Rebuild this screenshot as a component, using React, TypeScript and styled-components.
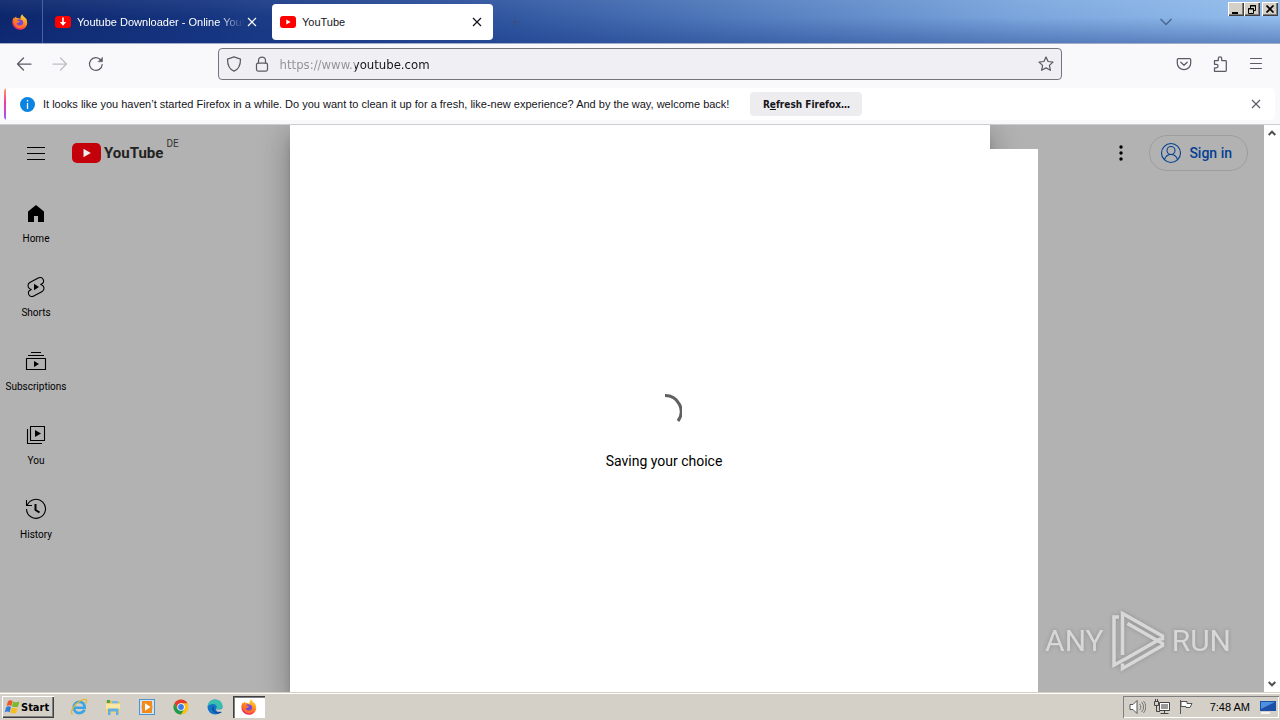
import React from "react";
import styled, { createGlobalStyle, css } from "styled-components";

const ui = `"Liberation Sans", Arial, sans-serif`;
const condensed = `"DejaVu Sans Condensed", "DejaVu Sans", sans-serif`;
const roboto = `Roboto, sans-serif`;

const GlobalStyle = createGlobalStyle`
  *, *::before, *::after { box-sizing: border-box; }
  body { margin: 0; overflow: hidden; font-family: ${ui}; font-size: 11px; color: #15141a; }
  button, input { font: inherit; color: inherit; padding: 0; border: 0; background: none; }
  svg { display: block; flex: none; }
  a { color: inherit; text-decoration: none; }
`;

const Screen = styled.div`
  display: flex;
  flex-direction: column;
  height: 100vh;
`;

/* Title bar */
const TitleBar = styled.header`
  display: flex;
  align-items: stretch;
  height: 44px;
  flex: none;
  border-bottom: 1px solid #a3aec6;
  background:
    linear-gradient(180deg, rgba(255, 255, 255, 0.06), rgba(20, 50, 130, 0) 40%, rgba(20, 50, 130, 0.38)),
    linear-gradient(90deg, #0c266c 0%, #163580 16%, #2b509b 36%, #5580c0 60%, #7ba6dd 80%, #93bdec 100%);
`;

const FirefoxView = styled.button`
  display: flex;
  align-items: center;
  justify-content: center;
  width: 43px;
  padding-right: 2px;
  border-right: 1px solid #4a629c;
`;

const TabStrip = styled.nav`
  display: flex;
  flex: 1;
  align-items: center;
  gap: 4px;
  padding-left: 4px;
`;

const Tab = styled.div<{ $active?: boolean }>`
  display: flex;
  align-items: center;
  width: 221px;
  height: 36px;
  padding: 0 8px;
  border-radius: 4px;
  color: ${(p) => (p.$active ? "#15141a" : "#fff")};
  background: ${(p) => (p.$active ? "#fff" : "transparent")};
`;

const TabTitle = styled.button<{ $fade?: boolean }>`
  display: flex;
  align-items: center;
  gap: 6px;
  flex: 1;
  min-width: 0;
  overflow: hidden;
  white-space: nowrap;
  text-align: left;
  ${(p) =>
    p.$fade &&
    css`
      mask-image: linear-gradient(90deg, #000 calc(100% - 26px), transparent);
    `}
`;

const IconButton = styled.button<{ $size?: number }>`
  display: flex;
  align-items: center;
  justify-content: center;
  flex: none;
  width: ${(p) => p.$size ?? 16}px;
  height: ${(p) => p.$size ?? 16}px;
`;

const TabsMenu = styled(IconButton)`
  align-self: center;
  margin-right: 54px;
`;

const WindowButtons = styled.div`
  display: flex;
  padding: 2px 2px 0 0;
`;

const WindowButton = styled.button<{ $apart?: boolean }>`
  display: flex;
  align-items: center;
  justify-content: center;
  width: 16px;
  height: 14px;
  margin-left: ${(p) => (p.$apart ? 2 : 0)}px;
  background: #d4d0c8;
  box-shadow: inset 1px 1px #fff, inset -1px -1px #404040, inset -2px -2px #808080;
`;

/* Navigation bar */
const NavBar = styled.div`
  display: flex;
  align-items: center;
  flex: none;
  height: 42px;
  padding: 0 6px 2px;
  background: #f9f9fb;
  color: #5b5b66;
`;

const Spring = styled.div`
  flex: 10;
`;

const UrlBox = styled.form`
  display: flex;
  align-items: center;
  flex: 80;
  height: 32px;
  padding: 0 7px;
  border: 1px solid #76757e;
  border-radius: 4px;
  background: #f0f0f4;
`;

const UrlInput = styled.input`
  flex: 1;
  height: 20px;
  margin-left: 10px;
  outline: 0;
  font-family: ${condensed};
  font-size: 13px;
  background: linear-gradient(90deg, #8f8f98 75px, #15141a 75px);
  background-clip: text;
  -webkit-background-clip: text;
  color: transparent;
`;

const Gap = styled.div`
  width: 12px;
`;

/* Notification */
const NoticeWrap = styled.div`
  flex: none;
  padding: 2px 5px 4px 4px;
  background: #f9f9fb;
  border-bottom: 1px solid #cccccf;
`;

const Notice = styled.div`
  display: flex;
  align-items: center;
  height: 32px;
  border-radius: 4px;
  background: linear-gradient(180deg, #ff9a66, #f03ba0 45%, #9059ff) 0 0 / 2px 100% no-repeat, #fff;
  padding: 0 11px 0 16px;
`;

const NoticeText = styled.span`
  margin: 0 21px 0 8px;
  white-space: nowrap;
`;

const RefreshButton = styled.button`
  width: 112px;
  height: 24px;
  border-radius: 4px;
  background: #ededf0;
  font-family: ${condensed};
  font-size: 10px;
  font-weight: 700;
  white-space: nowrap;
  margin-right: auto;
`;

/* Page */
const Viewport = styled.div`
  display: flex;
  flex: 1;
  min-height: 0;
`;

const Page = styled.div`
  position: relative;
  flex: 1;
  overflow: hidden;
  background: #b2b2b2;
  font-family: ${roboto};
  color: #000;
`;

const Masthead = styled.header`
  display: flex;
  align-items: center;
  height: 56px;
  padding: 0 16px;
`;

const Logo = styled.a`
  display: flex;
  align-items: center;
  gap: 3px;
  margin-left: 16px;
  font-size: 15px;
  font-weight: 700;
  color: #222;
`;

const Country = styled.span`
  align-self: flex-start;
  margin: 12px auto 0 3px;
  font-size: 10px;
  line-height: 14px;
  color: #333;
`;

const SignIn = styled.a`
  display: flex;
  align-items: center;
  gap: 6px;
  height: 36px;
  margin-left: 8px;
  padding: 0 15px 0 9px;
  border: 1px solid #9d9d9d;
  border-radius: 18px;
  font-size: 14px;
  font-weight: 500;
  color: #044193;
`;

const Guide = styled.nav`
  display: flex;
  flex-direction: column;
  width: 72px;
  padding-top: 5px;
`;

const GuideItem = styled.a`
  display: flex;
  flex-direction: column;
  align-items: center;
  gap: 8px;
  height: 74px;
  padding-top: 15px;
  font-size: 10px;
  line-height: 12px;
`;

const Consent = styled.div`
  position: absolute;
  top: 0;
  bottom: 0;
  left: calc(50% + 8px);
  width: 700px;
  margin-left: -350px;
  padding-top: 24px;
  background: #fff;
  box-shadow: 0 16px 24px 2px rgba(0, 0, 0, 0.14), 0 6px 30px 5px rgba(0, 0, 0, 0.12), 0 8px 10px -5px rgba(0, 0, 0, 0.4);
`;

const Saving = styled.div`
  display: flex;
  flex-direction: column;
  align-items: center;
  justify-content: center;
  gap: 22px;
  width: calc(100% + 48px);
  height: 100%;
  padding-top: 22px;
  background: #fff;
  font-size: 14px;
  line-height: 20px;
`;

const Watermark = styled.div`
  position: absolute;
  right: 33px;
  bottom: 20px;
  display: flex;
  align-items: center;
  gap: 6px;
  font-size: 30px;
  line-height: 62px;
  color: #d8d8d8;
  filter: drop-shadow(0 0 2px rgba(0, 0, 0, 0.2));
`;

const ScrollBar = styled.div`
  display: flex;
  flex-direction: column;
  justify-content: space-between;
  width: 16px;
  background: #fff;
`;

/* Task bar */
const TaskBar = styled.footer`
  display: flex;
  align-items: center;
  flex: none;
  height: 28px;
  padding: 2px 1px 0 2px;
  background: #d4d0c8;
  box-shadow: inset 0 1px #d4d0c8, inset 0 2px #fff;
`;

const StartButton = styled.button`
  display: flex;
  align-items: center;
  gap: 1px;
  width: 52px;
  height: 22px;
  margin-right: 9px;
  padding-left: 2px;
  font-family: ${condensed};
  font-weight: 700;
  font-size: 11px;
  color: #000;
  box-shadow: inset 1px 1px #fff, inset -1px -1px #404040, inset -2px -2px #808080;
`;

const TaskButton = styled.button<{ $active?: boolean }>`
  display: flex;
  align-items: center;
  justify-content: center;
  width: 32px;
  height: 22px;
  margin-right: 2px;
  ${(p) =>
    p.$active &&
    css`
      background: #fff;
      box-shadow: inset 1px 1px #404040, inset 2px 2px #808080, inset -1px -1px #fff;
    `}
`;

const Tray = styled.div`
  display: flex;
  align-items: center;
  gap: 8px;
  height: 22px;
  margin-left: auto;
  padding: 0 3px 0 6px;
  color: #000;
  box-shadow: inset 1px 1px #808080, inset -1px -1px #fff;
`;

const Clock = styled.time`
  margin: 0 2px 0 8px;
  white-space: nowrap;
`;

/* Drawings */
const FirefoxIcon = ({ id }: { id: string }) => (
  <svg width="16" height="16" viewBox="0 0 16 16">
    <defs>
      <linearGradient id={id} x1="0.8" y1="0" x2="0.3" y2="1">
        <stop offset="0" stopColor="#ffe14a" />
        <stop offset="0.4" stopColor="#ff9a1f" />
        <stop offset="0.75" stopColor="#ff4a3c" />
        <stop offset="1" stopColor="#e31587" />
      </linearGradient>
    </defs>
    <path d="M10.2.2c.4 1.6 2 2.2 3.1 3.8.4.2.9.5 1.2 1 .2.4.2.8.1 1.1 2 5-1.600 9.700-6.600 9.700C3.800 15.800.400 12.500.400 8.300c0-2 .5-3.700 1.700-5.100l.4 1.200c.5-.8 1-1.300 1.700-1.800l.2 1.500c1.600-.4 3.200.100 4 1C8.200 3.500 8.800 1.500 10.200.2z" fill={`url(#${id})`} />
    <path d="M4.800 6.300c.8-1 2-1.300 3.200-.9.600.2 1 .6 1.700.5 1 .7 1.500 1.700 1.400 2.900-.2 1.800-1.500 3-3.200 3C5.900 11.800 4.400 10.300 4.400 8.600c.7.300 1.500.200 2.200-.3l1.300-.7c0-.7-.9-.6-1.500-.8z" fill="#7548d8" />
    <path d="M1.700 6.700c1-.9 2.300-.7 3.200.1.600.8 2.100.3 2.700.9-.2.600-1 .7-1.500 1.100-.4.500-1.300.7-1.900.5.400 1.600 2 2.600 3.700 2.500 2.200-.1 3.600-1.600 3.700-3.600 1.400 2.700-.4 5.700-3.600 6C4.500 14.400 1.600 11 1.700 6.700z" fill="#ff7a26" opacity="0.85" />
  </svg>
);

const YtIcon = ({ w = 16, h = 12, arrow = false }: { w?: number; h?: number; arrow?: boolean }) => (
  <svg width={w} height={h} viewBox="0 0 16 12">
    <rect width="16" height="12" rx="3" fill="#f00" />
    {arrow ? <path d="M7.200 1.500h1.600v4.400h2.400L8 9.800 4.800 5.900h2.400z" fill="#fff" /> : <path d="M6.300 3.400v5.200L10.600 6z" fill="#fff" />}
  </svg>
);

const Cross = ({ color, size = 10 }: { color: string; size?: number }) => (
  <svg width={size} height={size} viewBox="0 0 10 10">
    <path d="M1 1l8 8M9 1L1 9" stroke={color} strokeWidth="1.200" />
  </svg>
);

type LineProps = { size?: number; w?: number; children: React.ReactNode };
const Line = ({ size = 16, w = 1.25, children }: LineProps) => (
  <svg width={size} height={size} viewBox={`0 0 ${size} ${size}`} fill="none" stroke="currentColor" strokeWidth={w} strokeLinecap="round" strokeLinejoin="round">
    {children}
  </svg>
);

const YtLogo = () => (
  <svg width="29" height="20" viewBox="0 0 29 20">
    <rect width="29" height="20" rx="5" fill="#c4000b" />
    <path d="M11.500 5.800v8.400L18.800 10z" fill="#eee" />
  </svg>
);

const guide = [
  {
    label: "Home",
    icon: <path d="M4 10.500L12 4l8 6.500V21h-6v-6h-4v6H4z" fill="currentColor" stroke="none" />,
  },
  {
    label: "Shorts",
    icon: (
      <>
        <path d="M14.200 2.900a3.600 3.600 0 0 1 4.900 1.400c.9 1.800.2 3.900-1.500 4.800l-.9.500 1.100.4c1.300.5 2.100 1.700 2.200 3.100.1 1.400-.6 2.600-1.800 3.300l-8.400 4.700a3.600 3.600 0 0 1-4.900-1.400c-.9-1.800-.2-3.900 1.500-4.800l.9-.5-1.100-.4A3.500 3.500 0 0 1 4 10.900c-.1-1.400.6-2.600 1.800-3.300z" />
        <path d="M10 8.800v6.400l5-3.200z" fill="currentColor" stroke="none" />
      </>
    ),
  },
  {
    label: "Subscriptions",
    icon: (
      <>
        <path d="M7 3.500h10M4 6.500h16M2.500 9.500h19v11h-19z" strokeLinecap="butt" />
        <path d="M10 12v6l5-3z" fill="currentColor" stroke="none" />
      </>
    ),
  },
  {
    label: "You",
    icon: (
      <>
        <path d="M6.500 3.500h14v14h-14zM3.500 6v14.500H18" strokeLinecap="butt" />
        <path d="M11 7v7l6-3.500z" fill="currentColor" stroke="none" />
      </>
    ),
  },
  {
    label: "History",
    icon: (
      <>
        <path d="M2.500 3v5.500H8M3.300 8A9.500 9.500 0 1 1 2.500 12" strokeLinecap="butt" />
        <path d="M11.500 7v6l4 2.500" strokeWidth="2" strokeLinecap="butt" />
      </>
    ),
  },
];

const StartFlag = () => (
  <svg width="16" height="16" viewBox="0 0 16 16">
    <path d="M4 2c2-1 3.300-.7 4.600 0L7.400 7c-1.500-.8-3-.9-4.700 0z" fill="#ea5a28" />
    <path d="M9.200 2.500c1.700.9 3.500.9 6.300 0L14.100 7.500c-2 .8-4 .7-6.100-.1z" fill="#7ab82e" />
    <path d="M2.300 8c1.600-.9 3.300-.8 4.700 0l-1.300 5.200c-1.500-.8-3-.8-5 0z" fill="#2f7fd8" />
    <path d="M7.700 8.500c1.800.9 3.900.9 6 .1L12.300 13.800c-2 .8-4.100.8-6-.1z" fill="#f8be20" />
  </svg>
);

const taskIcons = [
  {
    name: "Internet Explorer",
    icon: (
      <svg width="18" height="18" viewBox="0 0 18 18" fill="none">
        <path d="M14.500 11.800c-.8 2-2.800 3.300-5.200 3.300-3.200 0-5.600-2.300-5.600-5.600S6.100 3.900 9.300 3.900s5.400 2.300 5.400 5.900H5" stroke="#3aa4e4" strokeWidth="2.600" />
        <path d="M2.500 16.500C-.5 14 4 6.500 10 3c3.500-2 6-2 6.500-.8.4.9-.1 2-.9 3.200" stroke="#e6b62e" strokeWidth="1.300" />
      </svg>
    ),
  },
  {
    name: "Explorer",
    icon: (
      <svg width="16" height="16" viewBox="0 0 16 16">
        <path d="M1 1.500h5l1 1.500h8v11H1z" fill="#e3bd55" />
        <path d="M2 1h3v3H2z" fill="#4aa54a" />
        <path d="M7 2h6v3H7z" fill="#7fb9dd" />
        <path d="M1 4.500h14V10H1z" fill="#fbe7a0" />
        <path d="M1 10h14v4H1z" fill="#f0d37a" />
        <path d="M3 16V9.500h10.500V16H11v-3.500H5.500V16z" fill="#62b0e2" />
      </svg>
    ),
  },
  {
    name: "Media Player",
    icon: (
      <svg width="16" height="16" viewBox="0 0 16 16">
        <rect x="0.500" y="0.500" width="15" height="15" fill="#cfe5f6" stroke="#4d94cf" />
        <rect x="3" y="2" width="10" height="12" fill="#f28a1c" />
        <circle cx="8" cy="8" r="5.500" fill="#f28a1c" />
        <path d="M6 4.300v7.400L11.600 8z" fill="#fff" />
      </svg>
    ),
  },
  {
    name: "Chrome",
    icon: (
      <svg width="16" height="16" viewBox="0 0 16 16">
        <circle cx="8" cy="8" r="7.500" fill="#fbc116" />
        <path d="M1.500 4.250A7.500 7.500 0 0 1 14.500 4.250H8L4.700 10z" fill="#e33b2e" />
        <path d="M1.500 4.250A7.500 7.500 0 0 0 8 15.500L11.200 9.900 4.700 9.900z" fill="#229a4d" />
        <circle cx="8" cy="8" r="3.800" fill="#fff" />
        <circle cx="8" cy="8" r="2.900" fill="#3b7ded" />
      </svg>
    ),
  },
  {
    name: "Edge",
    icon: (
      <svg width="16" height="16" viewBox="0 0 16 16">
        <circle cx="8" cy="8" r="7.500" fill="#1574c8" />
        <path d="M.6 7.500C1 3.500 4 .5 8 .5c4.300 0 7.500 2.800 7.500 6.300 0 2.300-1.700 3.700-4 3.700-1.500 0-2.300-.6-2.300-1.200 0-.5.500-.7.500-1.600C9.700 6 8 4.900 6 4.900 3.500 4.900 1.500 6 .6 7.500z" fill="#38bfae" />
        <path d="M6.200 7.500c-1 2.800.8 5.900 4 6.400 1.700.2 3-.2 4-.9" stroke="#0d4d9b" strokeWidth="1.500" fill="none" />
        <path d="M9.300 9.400c.3.800 1.300 1.200 2.500 1.200 1.600 0 2.900-.7 3.500-1.600L16 12l-3 .8c-2.500.3-4.500-1-3.700-3.400z" fill="#d4d0c8" />
      </svg>
    ),
  },
];

const AnyRunMark = () => (
  <svg width="56" height="62" viewBox="0 0 56 62" fill="none" stroke="#d8d8d8" strokeWidth="3.500">
    <path d="M9 7H4v48l13-7 34-19.500" />
    <path d="M12.500 45V3.500l40 22.500v4.500" />
    <path d="M12.500 53.500v5l40-23v-2L17.500 13.500" />
  </svg>
);

export default function App() {
  return (
    <Screen>
      <GlobalStyle />
      <TitleBar>
        <FirefoxView aria-label="Firefox View"><FirefoxIcon id="view" /></FirefoxView>
        <TabStrip>
          <Tab>
            <TabTitle $fade><YtIcon arrow /><span>Youtube Downloader - Online Youtu</span></TabTitle>
            <IconButton aria-label="Close tab"><Cross color="#fff" /></IconButton>
          </Tab>
          <Tab $active>
            <TabTitle><YtIcon /><span>YouTube</span></TabTitle>
            <IconButton aria-label="Close tab"><Cross color="#15141a" /></IconButton>
          </Tab>
          <IconButton $size={36} aria-label="New tab">
            <svg width="10" height="10" viewBox="0 0 10 10"><path d="M5 0v10M0 5h10" stroke="#3c4f7c" /></svg>
          </IconButton>
        </TabStrip>
        <TabsMenu aria-label="List all tabs">
          <svg width="14" height="8" viewBox="0 0 14 8" fill="none"><path d="M1.500 1L7 6.500 12.500 1" stroke="#4b6790" strokeWidth="1.500" /></svg>
        </TabsMenu>
        <WindowButtons>
          <WindowButton aria-label="Minimize">
            <svg width="10" height="9" viewBox="0 0 10 9"><path d="M1 7h6v2H1z" /></svg>
          </WindowButton>
          <WindowButton aria-label="Restore">
            <svg width="10" height="9" viewBox="0 0 10 9" fill="none" stroke="#000"><path d="M3.500 3V.5h5V5.500H7M3 1h6M1.500 3.500h5v5h-5zM1 4h6" /></svg>
          </WindowButton>
          <WindowButton $apart aria-label="Close">
            <svg width="9" height="8" viewBox="0 0 9 8"><path d="M.5 0.500l7 7M7.500 .5l-7 7" stroke="#000" strokeWidth="1.700" /></svg>
          </WindowButton>
        </WindowButtons>
      </TitleBar>

      <NavBar>
        <IconButton $size={36} aria-label="Back"><Line><path d="M15 8H1.500M7.500 2l-6 6 6 6" /></Line></IconButton>
        <IconButton $size={36} aria-label="Forward" disabled>
          <svg width="16" height="16" viewBox="0 0 16 16" fill="none" stroke="#bebec4" strokeWidth="1.250" strokeLinecap="round"><path d="M1 8h13.500M8.500 2l6 6-6 6" /></svg>
        </IconButton>
        <IconButton $size={36} aria-label="Reload">
          <Line><path d="M14.200 8.500A6.400 6.400 0 1 1 12.800 4" /><path d="M14.500 1.500v4.300h-4.300z" fill="currentColor" strokeWidth="0.500" /></Line>
        </IconButton>
        <Spring />
        <UrlBox>
          <Line><path d="M8 .8l6.500 2.400c0 5.800-1.800 10-6.500 12-4.700-2-6.500-6.200-6.500-12z" /></Line>
          <Gap />
          <Line><rect x="2.500" y="7" width="11" height="8" rx="1.500" /><path d="M4.500 7V4.500a3.500 3.500 0 0 1 7 0V7" /></Line>
          <UrlInput aria-label="Address" defaultValue="https://www.youtube.com" />
          <IconButton type="button" aria-label="Bookmark">
            <Line><path d="M8 1l2.100 4.500 4.900.6-3.600 3.300 1 4.900L8 11.900l-4.400 2.400 1-4.900L1 6.100l4.900-.6z" /></Line>
          </IconButton>
        </UrlBox>
        <Spring />
        <IconButton $size={36} aria-label="Save to Pocket">
          <Line><path d="M2.500 2.500h11a1.200 1.200 0 0 1 1.200 1.200v3.600a6.700 6.200 0 0 1-13.400 0V3.700a1.200 1.200 0 0 1 1.200-1.200zM4.800 6.200L8 9.300l3.200-3.100" /></Line>
        </IconButton>
        <IconButton $size={36} aria-label="Extensions">
          <Line><path d="M2.500 4.500h3.800v-2a1.700 1.700 0 0 1 3.400 0v2h3.800a.8.800 0 0 1 .8.800v9.200a.8.800 0 0 1-.8.800H2.500v-3.500h1.800a1.700 1.700 0 0 0 0-3.500H2.500z" /></Line>
        </IconButton>
        <IconButton $size={36} aria-label="Menu"><Line w={1}><path d="M2.500 2.500h11M2.500 7.500h11M2.500 12.500h11" /></Line></IconButton>
      </NavBar>

      <NoticeWrap>
        <Notice role="status">
          <svg width="15" height="15" viewBox="0 0 15 15"><circle cx="7.500" cy="7.500" r="7.500" fill="#0a84e0" /><path d="M7.500 3v1.500M7.500 6v6" stroke="#fff" strokeWidth="1.300" /></svg>
          <NoticeText>It looks like you haven’t started Firefox in a while. Do you want to clean it up for a fresh, like-new experience? And by the way, welcome back!</NoticeText>
          <RefreshButton>R<u>e</u>fresh Firefox…</RefreshButton>
          <IconButton aria-label="Dismiss"><Cross color="#5b5b66" /></IconButton>
        </Notice>
      </NoticeWrap>

      <Viewport>
        <Page>
          <Masthead>
            <IconButton $size={40} aria-label="Guide">
              <svg width="18" height="13" viewBox="0 0 18 13"><path d="M0 .5h18M0 6.500h18M0 12.500h18" stroke="#000" /></svg>
            </IconButton>
            <Logo href="#"><YtLogo />YouTube</Logo>
            <Country>DE</Country>
            <IconButton $size={40} aria-label="Settings">
              <svg width="4" height="16" viewBox="0 0 4 16"><circle cx="2" cy="2" r="1.700" /><circle cx="2" cy="8" r="1.700" /><circle cx="2" cy="14" r="1.700" /></svg>
            </IconButton>
            <SignIn href="#">
              <Line size={24} w={1.1}><circle cx="12" cy="12" r="9.500" /><circle cx="12" cy="9.500" r="4" /><path d="M5.500 18.500c1-3 3.500-5 6.500-5s5.500 2 6.500 5" /></Line>
              Sign in
            </SignIn>
          </Masthead>
          <Guide>
            {guide.map((g) => (
              <GuideItem href="#" key={g.label}>
                <Line size={24} w={1.1}>{g.icon}</Line>
                {g.label}
              </GuideItem>
            ))}
          </Guide>
          <Consent role="dialog" aria-label="Saving your choice">
            <Saving>
              <svg width="36" height="36" viewBox="0 0 36 36" fill="none"><path d="M19 2.500A16 16 0 0 1 32 28" stroke="#606060" strokeWidth="3" /></svg>
              Saving your choice
            </Saving>
          </Consent>
          <Watermark><span>ANY</span><AnyRunMark /><span>RUN</span></Watermark>
        </Page>
        <ScrollBar>
          <IconButton aria-label="Scroll up"><svg width="8" height="6" viewBox="0 0 8 6" fill="none"><path d="M.7 5L4 1.700 7.300 5" stroke="#505050" strokeWidth="2" /></svg></IconButton>
          <IconButton aria-label="Scroll down"><svg width="8" height="6" viewBox="0 0 8 6" fill="none"><path d="M.7 1L4 4.300 7.300 1" stroke="#505050" strokeWidth="2" /></svg></IconButton>
        </ScrollBar>
      </Viewport>

      <TaskBar>
        <StartButton><StartFlag />Start</StartButton>
        {taskIcons.map((t) => (
          <TaskButton key={t.name} aria-label={t.name}>{t.icon}</TaskButton>
        ))}
        <TaskButton $active aria-label="Firefox"><FirefoxIcon id="task" /></TaskButton>
        <Tray>
          <svg width="17" height="16" viewBox="0 0 17 16" fill="none" stroke="#777"><path d="M1 5.500h3L8 1.500v13l-4-4H1z" fill="#fff" stroke="#555" /><path d="M10.500 5a4 4 0 0 1 0 6M12.500 3a7 7 0 0 1 0 10M14.500 2a9 9 0 0 1 0 12" /></svg>
          <svg width="16" height="16" viewBox="0 0 16 16" fill="none" stroke="#444"><path d="M5.500 3.500h10v8h-10z" fill="#fff" /><path d="M7 5h7v5H7z" fill="#999" stroke="none" /><path d="M10.500 12v2M6.500 14.500h8" /><path d="M.5 2.500h4v4h-4zM1.500 0v2M3.500 0v2M2.500 7v5.500H6" /></svg>
          <svg width="16" height="16" viewBox="0 0 16 16" fill="none" stroke="#555"><path d="M2.500 1v14M3 2.500h6v2h5l-2 4H8v-1H3z" fill="#fff" /></svg>
          <Clock>7:48 AM</Clock>
          <svg width="16" height="16" viewBox="0 0 16 16"><path d="M0 2h16v10H0z" fill="#1e4fa8" /><path d="M1 3h14L1 10z" fill="#4d8fe0" /><path d="M1 13h9v2H1z" fill="#f4f4f4" /></svg>
        </Tray>
      </TaskBar>
    </Screen>
  );
}
